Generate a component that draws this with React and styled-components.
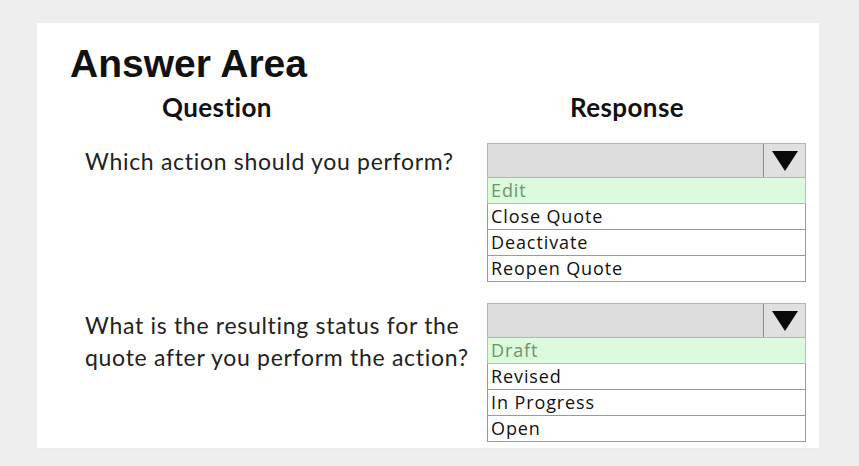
import React from "react";
import styled, { createGlobalStyle } from "styled-components";

const Global = createGlobalStyle`
  html, body { margin: 0; padding: 0; }
  body {
    background: #eeeeee;
    width: 859px;
    height: 466px;
    overflow: hidden;
  }
`;

const Page = styled.div`
  padding: 23px 0 0 37px;
`;

const Card = styled.div`
  width: 782px;
  height: 425px;
  box-sizing: border-box;
  background: #ffffff;
  padding: 19px 0 0 33px;
  box-shadow: 0 0 1px rgba(0, 0, 0, 0.08);
`;

const Title = styled.h1`
  margin: 0;
  font-family: "Liberation Sans", Arial, sans-serif;
  font-weight: 700;
  font-size: 39px;
  line-height: 44px;
  color: #111;
`;

const Grid = styled.div`
  display: grid;
  grid-template-columns: 402px 319px;
  margin-left: 15px;
  margin-top: 6px;
`;

const ColHead = styled.div`
  font-family: Lato, "Open Sans", sans-serif;
  font-weight: 700;
  font-size: 26px;
  line-height: 30px;
  letter-spacing: 0.4px;
  color: #111;
  padding-left: ${(p) => p.$indent}px;
  margin-bottom: ${(p) => p.$gap || 0}px;
`;

const Question = styled.div`
  font-family: Lato, "Open Sans", sans-serif;
  font-size: 23px;
  line-height: 32px;
  color: #222;
  padding-top: ${(p) => p.$offset}px;
  letter-spacing: 0.7px;
`;

const Dropdown = styled.div`
  display: flex;
  flex-direction: column;
  width: 319px;
  margin-bottom: ${(p) => p.$gap || 0}px;
`;

const Header = styled.div`
  display: flex;
  height: 35px;
  box-sizing: border-box;
  border: 1px solid #b4b4b4;
  background: #dcdcdc;
`;

const HeaderField = styled.div`
  flex: 1;
  border-right: 1px solid #8c8c8c;
`;

const ArrowCell = styled.div`
  width: 41px;
  display: flex;
  align-items: center;
  justify-content: center;
  background: #e0e0e0;
`;

const Option = styled.div`
  height: 26px;
  box-sizing: border-box;
  border: 1px solid #9a9a9a;
  border-top: none;
  background: ${(p) => (p.$selected ? "#dcfbdc" : "#ffffff")};
  color: ${(p) => (p.$selected ? "#6c936c" : "#111")};
  font-family: "Open Sans", Lato, sans-serif;
  font-size: 18px;
  line-height: 20px;
  letter-spacing: 0.9px;
  padding: 2px 0 0 3px;
  white-space: nowrap;
  overflow: hidden;
  ${(p) => (p.$selected ? "border-color: #a8c8a8;" : "")}
`;

const Arrow = () => (
  <svg width="26" height="20" viewBox="0 0 26 20">
    <polygon points="0,0 26,0 13,20" fill="#0a0a0a" />
  </svg>
);

const Select = ({ options, gap }) => (
  <Dropdown $gap={gap}>
    <Header>
      <HeaderField />
      <ArrowCell>
        <Arrow />
      </ArrowCell>
    </Header>
    {options.map((o, i) => (
      <Option key={o} $selected={i === 0}>
        {o}
      </Option>
    ))}
  </Dropdown>
);

export default function App() {
  return (
    <>
      <Global />
      <Page>
        <Card>
          <Title>Answer Area</Title>
          <Grid>
            <ColHead $indent={77} $gap={21}>Question</ColHead>
            <ColHead $indent={83} $gap={21}>Response</ColHead>
            <Question $offset={2}>Which action should you perform?</Question>
            <Select
              gap={21}
              options={["Edit", "Close Quote", "Deactivate", "Reopen Quote"]}
            />
            <Question $offset={6}>
              What is the resulting status for the
              <br />
              quote after you perform the action?
            </Question>
            <Select options={["Draft", "Revised", "In Progress", "Open"]} />
          </Grid>
        </Card>
      </Page>
    </>
  );
}
